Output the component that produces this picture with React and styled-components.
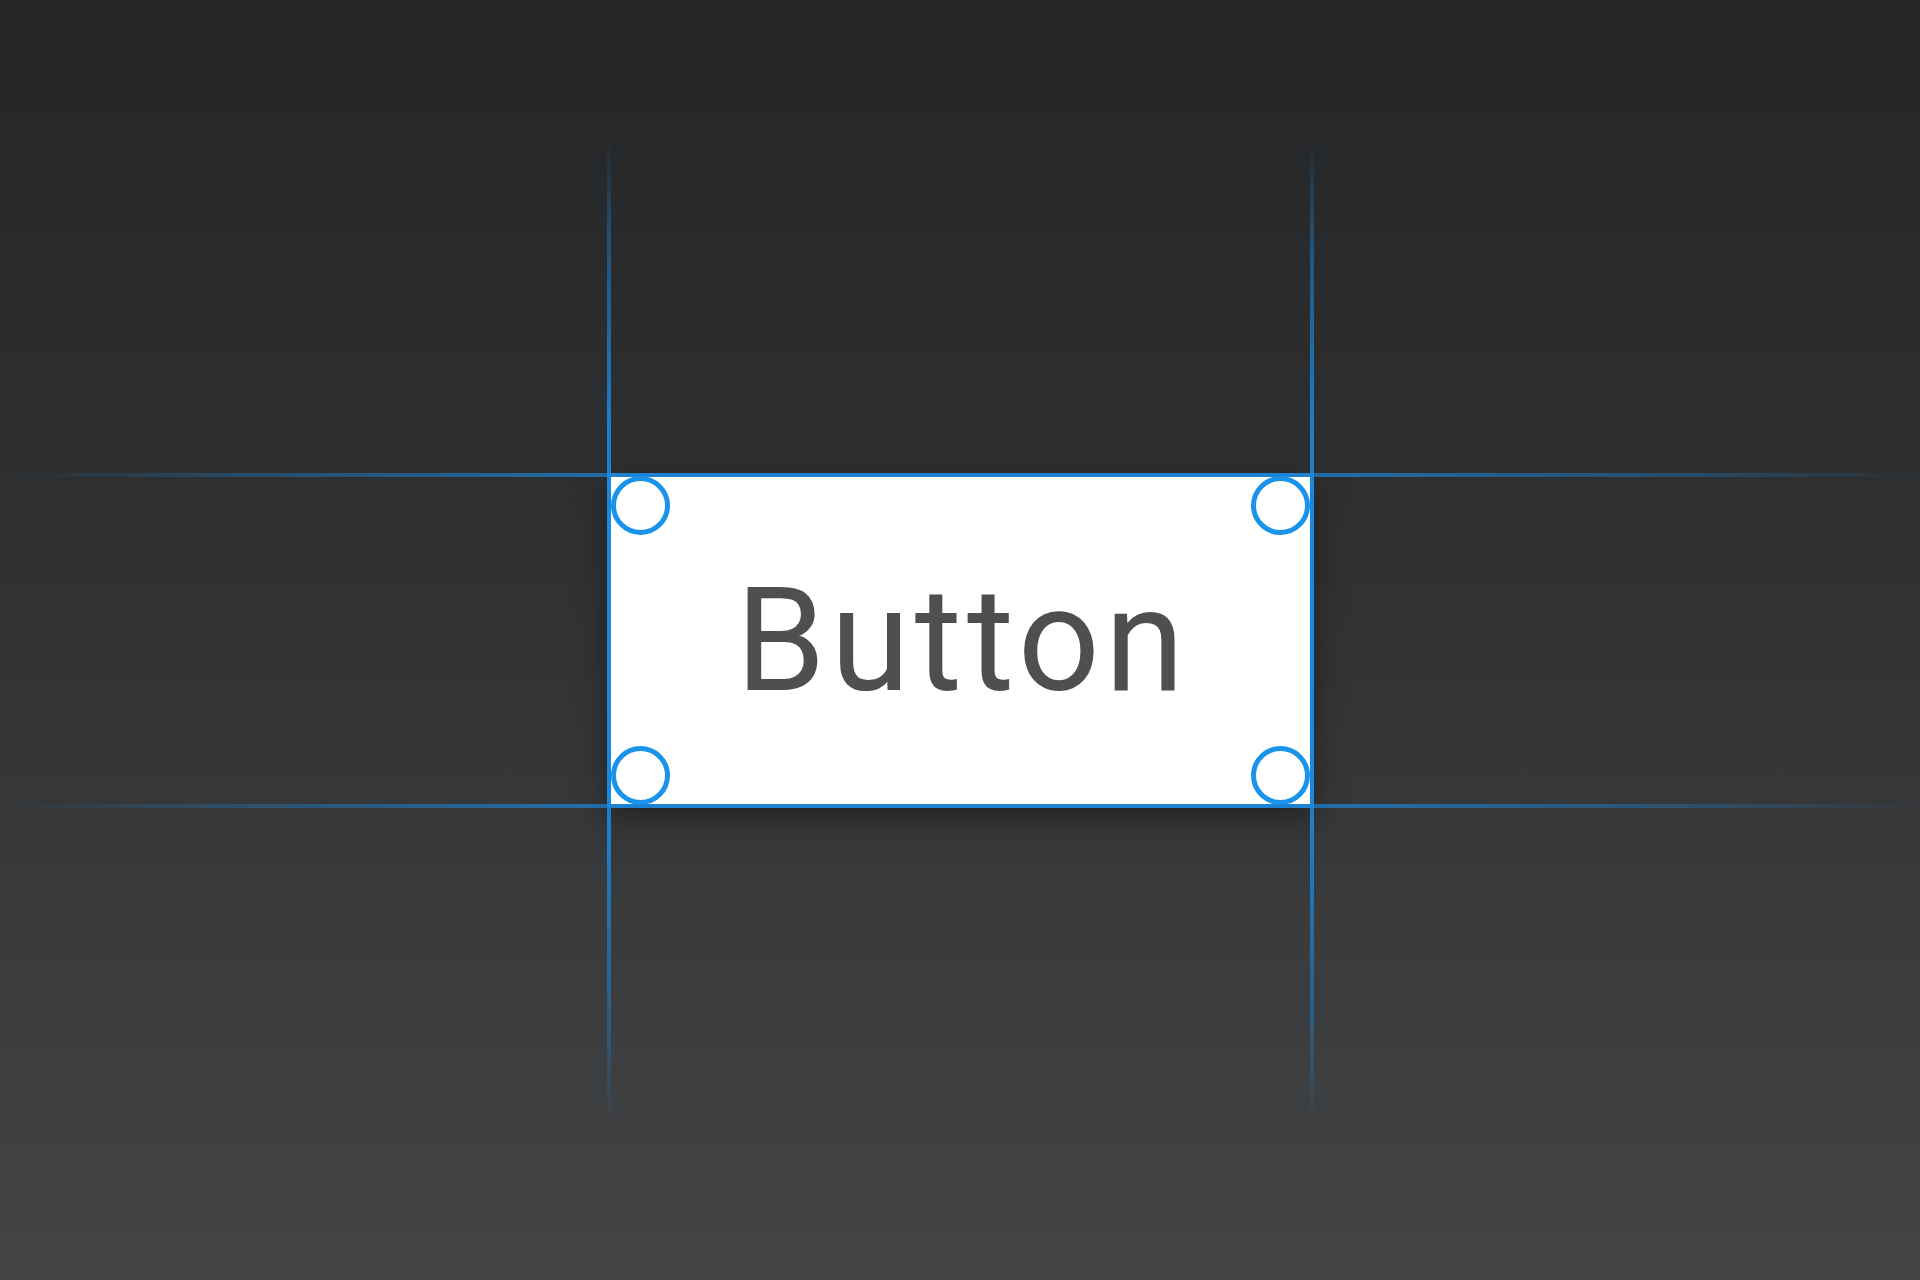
import styled, { createGlobalStyle } from "styled-components";

const GlobalStyle = createGlobalStyle`
  html, body {
    margin: 0;
    padding: 0;
  }
  body {
    font-family: Roboto, "Liberation Sans", sans-serif;
  }
`;

const Stage = styled.div`
  width: 1920px;
  height: 1280px;
  display: flex;
  align-items: center;
  justify-content: center;
  background: linear-gradient(to bottom, #232527 0%, #2f3133 45%, #434446 100%);
  overflow: hidden;
`;

const Frame = styled.div`
  position: relative;
  width: 707px;
  height: 335px;
`;

const Card = styled.div`
  box-sizing: border-box;
  width: 100%;
  height: 100%;
  display: flex;
  align-items: center;
  justify-content: center;
  background: #ffffff;
  border: 4px solid #1a8ae0;
  box-shadow: 0 12px 30px rgba(0, 0, 0, 0.35);
`;

const Label = styled.span`
  font-family: Roboto, "Liberation Sans", sans-serif;
  font-size: 144px;
  font-weight: 400;
  letter-spacing: 5px;
  color: #4f4f4f;
  line-height: 1;
  margin: 2px 0 0 5px;
`;

// guide lines lie over the background and the card edges
const HGuide = styled.div`
  position: absolute;
  left: -592px;
  right: -605px;
  height: 4px;
  ${(p) => (p.$edge === "top" ? "top: 0;" : "bottom: 0;")}
  background: linear-gradient(
    to right,
    rgba(30, 128, 205, 0) 0%,
    rgba(30, 128, 205, 0.35) 12%,
    rgba(30, 128, 205, 0.75) 30%,
    rgba(30, 128, 205, 0.75) 70%,
    rgba(30, 128, 205, 0.35) 88%,
    rgba(30, 128, 205, 0) 100%
  );
  pointer-events: none;
`;

const VGuide = styled.div`
  position: absolute;
  top: -335px;
  bottom: -315px;
  width: 4px;
  ${(p) => (p.$edge === "left" ? "left: 0;" : "right: 0;")}
  background: linear-gradient(
    to bottom,
    rgba(26, 136, 222, 0) 0%,
    rgba(26, 136, 222, 0.4) 10%,
    rgba(26, 136, 222, 0.9) 30%,
    rgba(26, 136, 222, 0.9) 70%,
    rgba(26, 136, 222, 0.4) 90%,
    rgba(26, 136, 222, 0) 100%
  );
  pointer-events: none;
`;

const Handle = styled.div`
  position: absolute;
  box-sizing: border-box;
  width: 59px;
  height: 59px;
  border-radius: 50%;
  border: 5px solid #1a93ea;
  background: #ffffff;
  ${(p) => (p.$v === "top" ? "top: 3px;" : "bottom: 3px;")}
  ${(p) => (p.$h === "left" ? "left: 4px;" : "right: 4px;")}
`;

export default function App() {
  return (
    <>
      <GlobalStyle />
      <Stage>
        <Frame>
          <Card>
            <Label>Button</Label>
          </Card>
          <HGuide $edge="top" />
          <HGuide $edge="bottom" />
          <VGuide $edge="left" />
          <VGuide $edge="right" />
          <Handle $v="top" $h="left" />
          <Handle $v="top" $h="right" />
          <Handle $v="bottom" $h="left" />
          <Handle $v="bottom" $h="right" />
        </Frame>
      </Stage>
    </>
  );
}
